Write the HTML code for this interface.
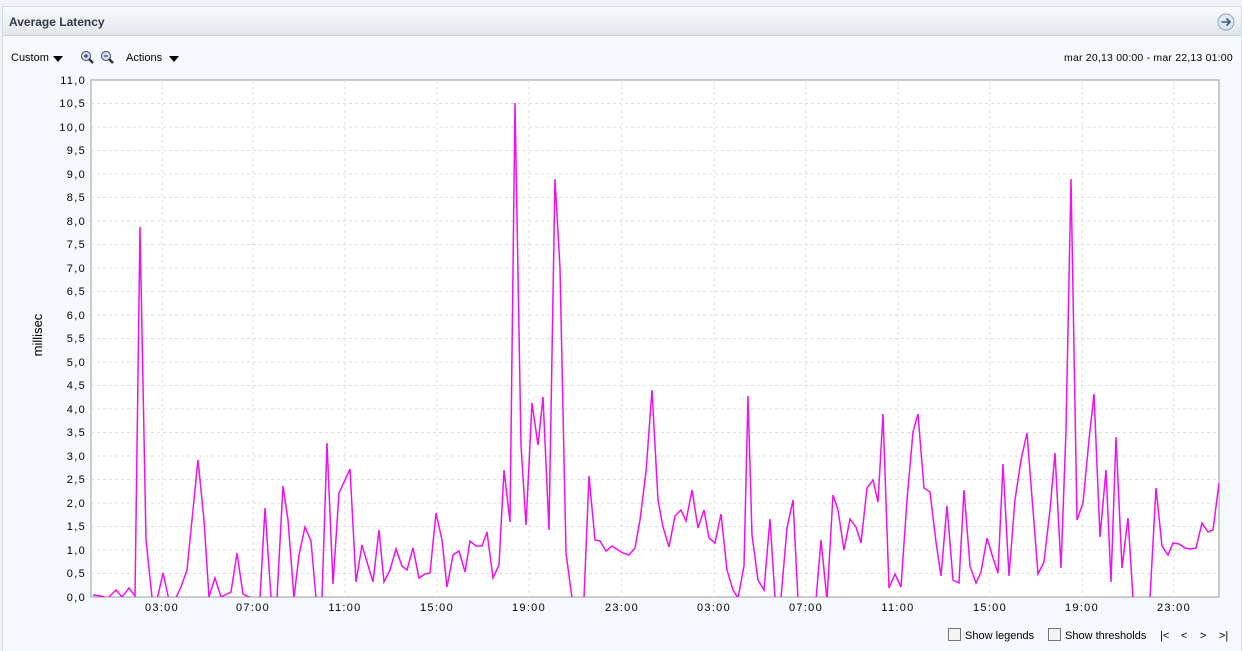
<!DOCTYPE html>
<html><head><style>
body{margin:0;width:1242px;height:650px;background:#eef2f7;font-family:"Liberation Sans",sans-serif;position:relative;overflow:hidden}
.panel{position:absolute;left:2px;top:6px;width:1238px;height:644px;background:#f5f8fc;border:1px solid #d5dbe3;border-bottom:none}
.hdr{position:absolute;left:0;top:0;right:0;height:28px;background:linear-gradient(#f9fafc,#e2e6eb);border-bottom:1px solid #c9cfd7}
.t{position:absolute;font-size:12px;color:#000}
</style></head><body>
<div class="panel">
<div class="hdr">
<div class="t" style="left:6px;top:8px;font-weight:bold;color:#2f3b4a;font-size:12px">Average Latency</div>
<svg style="position:absolute;left:1214px;top:6px" width="18" height="18"><circle cx="9" cy="9" r="8" fill="#dfe8f2" stroke="#8ea4bd"/><path d="M4.5 9H13M9.5 5.5L13 9L9.5 12.5" stroke="#3c5a7e" stroke-width="1.6" fill="none"/></svg>
</div>
</div>
<div class="t" style="left:11px;top:52px;font-size:11px">Custom</div>
<svg style="position:absolute;left:53px;top:56px" width="11" height="7"><path d="M0 0H10L5 6Z"/></svg>
<svg style="position:absolute;left:80px;top:50px" width="14" height="14"><circle cx="6" cy="6" r="4.5" fill="#cfe0f3" stroke="#445"/><path d="M9 9L13 13" stroke="#333" stroke-width="2.5"/><path d="M4 6H8M6 4V8" stroke="#124"/></svg>
<svg style="position:absolute;left:100px;top:50px" width="14" height="14"><circle cx="6" cy="6" r="4.5" fill="#cfe0f3" stroke="#445"/><path d="M9 9L13 13" stroke="#333" stroke-width="2.5"/><path d="M4 6H8" stroke="#124"/></svg>
<div class="t" style="left:126px;top:52px;font-size:11px">Actions</div>
<svg style="position:absolute;left:169px;top:56px" width="11" height="7"><path d="M0 0H10L5 6Z"/></svg>
<div class="t" style="left:1064px;top:52px;font-size:10.5px;letter-spacing:0.2px">mar 20,13 00:00 - mar 22,13 01:00</div>
<svg style="position:absolute;left:0;top:0" width="1242" height="650" font-family="Liberation Sans" font-size="11">
<defs><clipPath id="c"><rect x="91" y="80" width="1128" height="517"/></clipPath></defs>
<rect x="91" y="80" width="1128" height="517" fill="#fff" stroke="#999"/>
<g stroke="#ddd" stroke-dasharray="3,3">
<path d="M91 103.5H1219M91 127H1219M91 150.5H1219M91 174H1219M91 197.5H1219M91 221H1219M91 244.5H1219M91 268H1219M91 291.5H1219M91 315H1219M91 338.5H1219M91 362H1219M91 385.5H1219M91 409H1219M91 432.5H1219M91 456H1219M91 479.5H1219M91 503H1219M91 526.5H1219M91 550H1219M91 573.5H1219"/>
<path d="M162 80V597M253 80V597M345 80V597M437 80V597M529 80V597M622 80V597M714 80V597M806 80V597M898 80V597M990 80V597M1082 80V597M1174 80V597"/>
</g>
<g text-anchor="end" fill="#000" letter-spacing="1.3">
<text x="86" y="84">11,0</text><text x="86" y="107">10,5</text><text x="86" y="131">10,0</text><text x="86" y="154">9,5</text><text x="86" y="178">9,0</text><text x="86" y="201">8,5</text><text x="86" y="225">8,0</text><text x="86" y="248">7,5</text><text x="86" y="272">7,0</text><text x="86" y="295">6,5</text><text x="86" y="319">6,0</text><text x="86" y="342">5,5</text><text x="86" y="366">5,0</text><text x="86" y="389">4,5</text><text x="86" y="413">4,0</text><text x="86" y="436">3,5</text><text x="86" y="460">3,0</text><text x="86" y="483">2,5</text><text x="86" y="507">2,0</text><text x="86" y="530">1,5</text><text x="86" y="554">1,0</text><text x="86" y="577">0,5</text><text x="86" y="601">0,0</text>
</g>
<g text-anchor="middle" letter-spacing="1.3">
<text x="162" y="611">03:00</text><text x="253" y="611">07:00</text><text x="345" y="611">11:00</text><text x="437" y="611">15:00</text><text x="529" y="611">19:00</text><text x="622" y="611">23:00</text><text x="714" y="611">03:00</text><text x="806" y="611">07:00</text><text x="898" y="611">11:00</text><text x="990" y="611">15:00</text><text x="1082" y="611">19:00</text><text x="1174" y="611">23:00</text>
</g>
<text transform="translate(42,335) rotate(-90)" text-anchor="middle" font-size="13">millisec</text>
<polyline clip-path="url(#c)" fill="none" stroke="#ee11ee" stroke-width="1.5" points="93,595 101,596 108,598 116,590 122,597 129,588 135,596 140,227 146,540 152,597 157,600 163,573 169,600 175,600 181,587 187,570 198,460 204,520 209,597 215,578 221,597 231,592 237,553 243,594 249,597 254,598 260,598 265,508 271,597 277,598 283,486 288,520 294,598 299,555 305,527 311,541 316,598 322,598 327,443 333,584 339,493 350,469 356,582 362,545 373,582 379,530 384,582 390,570 396,549 402,566 407,570 413,548 419,578 425,574 430,573 436,513 442,540 447,587 453,555 459,551 465,572 470,541 476,546 482,546 487,532 493,578 499,565 504,470 510,522 515,103 521,445 526,525 532,403 538,445 543,397 549,530 555,179 560,268 566,553 572,598 578,600 584,598 589,476 595,540 600,541 606,551 612,546 618,550 623,553 629,555 635,548 640,520 646,472 652,390 658,500 663,527 669,547 675,516 681,510 686,521 692,490 698,528 704,510 709,538 715,543 721,514 727,570 733,590 738,598 744,566 748,396 752,535 758,580 764,590 770,519 775,598 781,598 787,528 793,500 798,600 804,600 810,600 816,600 821,540 827,600 833,495 838,510 844,550 850,519 856,527 861,543 867,488 873,480 878,502 883,414 889,588 895,574 901,587 907,500 913,432 918,414 924,488 930,492 936,542 941,576 947,506 953,580 959,583 964,490 970,566 976,583 981,572 987,538 993,558 998,573 1003,464 1009,576 1015,500 1021,460 1027,433 1033,510 1038,574 1044,562 1050,510 1055,453 1061,568 1066,430 1071,179 1077,520 1083,503 1089,440 1094,394 1100,537 1106,470 1111,582 1116,437 1122,568 1128,518 1133,598 1139,598 1145,598 1150,598 1156,488 1162,546 1168,555 1173,543 1179,544 1185,548 1190,549 1196,548 1202,523 1208,532 1213,530 1219,483"/>
<rect x="948.5" y="628.5" width="12" height="12" fill="#f4f4f4" stroke="#777"/>
<text x="965" y="639">Show legends</text>
<rect x="1048.5" y="628.5" width="12" height="12" fill="#f4f4f4" stroke="#777"/>
<text x="1065" y="639">Show thresholds</text>
<text x="1160" y="639">|&lt;</text><text x="1181" y="639">&lt;</text><text x="1200" y="639">&gt;</text><text x="1219" y="639">&gt;|</text>
</svg>
</body></html>
